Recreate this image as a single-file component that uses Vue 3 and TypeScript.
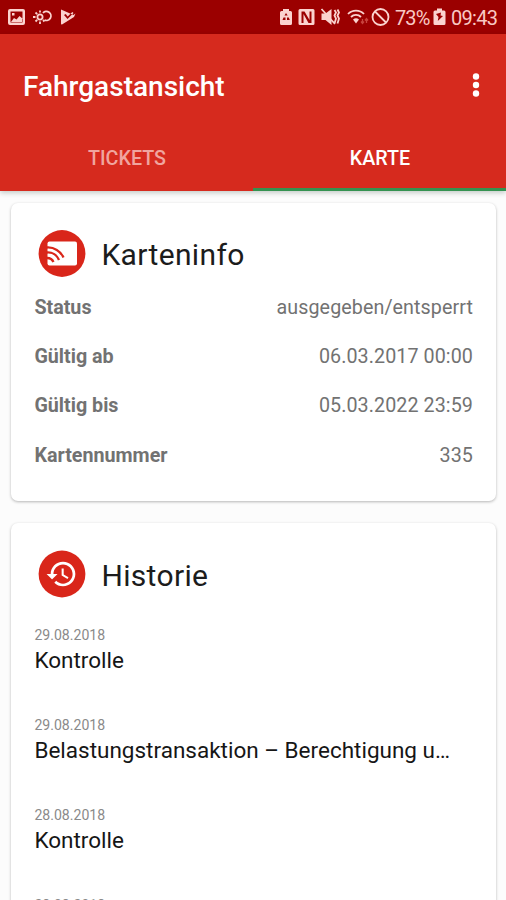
<script setup lang="ts">
interface InfoRow {
  label: string
  value: string
}
interface HistoryEntry {
  date: string
  title: string
}

const infoRows: InfoRow[] = [
  { label: 'Status', value: 'ausgegeben/entsperrt' },
  { label: 'Gültig ab', value: '06.03.2017 00:00' },
  { label: 'Gültig bis', value: '05.03.2022 23:59' },
  { label: 'Kartennummer', value: '335' },
]

const history: HistoryEntry[] = [
  { date: '29.08.2018', title: 'Kontrolle' },
  { date: '29.08.2018', title: 'Belastungstransaktion – Berechtigung u…' },
  { date: '28.08.2018', title: 'Kontrolle' },
  { date: '28.08.2018', title: 'Kontrolle' },
]
</script>

<template>
  <div class="screen">
    <div class="statusbar">
      <svg class="notifications" width="80" height="34" viewBox="0 0 80 34">
        <path class="fill" fill-rule="evenodd" d="M10 9h13a2 2 0 0 1 2 2v12a2 2 0 0 1-2 2H10a2 2 0 0 1-2-2V11a2 2 0 0 1 2-2zM10.500 11.500v11h12v-11zM11 22l3-4 2.500 1.500 3-3.500 3.500 3v3zM12 13h2.500v2.500H12z" />
        <g class="line">
          <path d="M43 13a4.500 4.500 0 1 1 1.500 7" />
          <circle cx="40" cy="17" r="2.600" />
          <path d="M40 10.500v2M40 21.500v2.500M33 17h2.500M35.500 12.500l1.700 1.700M35.500 21.500l1.700-1.700M44.500 21.500l-1.500-1.500" />
        </g>
        <path class="fill" fill-rule="evenodd" d="M61 9.500L73.500 15l2-1.500L74 17 62 24.500q-1 .3-1-1zM64 15l3.500 4 6-6-1.200-1-4.600 4.600-2-2.500z" />
      </svg>
      <div class="system">
        <svg width="120" height="34" viewBox="0 0 120 34">
          <path class="fill" fill-rule="evenodd" d="M12 9h6v2h1.500a1.500 1.500 0 0 1 1.500 1.500v11A1.500 1.500 0 0 1 19.500 25h-9A1.500 1.500 0 0 1 9 23.500v-11A1.500 1.500 0 0 1 10.500 11H12zM13.500 15.500L15 13l1.700 2.500zM11.500 20h3v-2.500h-2zM16 20h2.800l-1-2.500H16z" />
          <path class="fill" fill-rule="evenodd" d="M29 9h13a1.500 1.500 0 0 1 1.500 1.500v13A1.500 1.500 0 0 1 42 25H29a1.500 1.500 0 0 1-1.500-1.500v-13A1.500 1.500 0 0 1 29 9zM30.500 11.500v11.500h2v-9l5 9h3V11.500h-2v8.500l-5-8.500z" />
          <path class="fill" d="M50.500 13.500h4l6-4.500v16l-6-5h-4z" />
          <path class="line" d="M50.500 9l13.500 15M63.500 10l1.500 2.500-1.500 3 1.500 3-1.500 5M66.500 9.500l1.500 3-1.500 3 1.500 3-1.500 5" />
          <path class="line" d="M77 14a11 11 0 0 1 16 0M80 17a7 7 0 0 1 10 0" />
          <path class="fill" d="M82 19.500a4.500 4.500 0 0 1 6 0l-3 4z" />
          <path class="faint" d="M91.500 19v4M90 21.500l1.500 2 1.500-2M95.500 23v-4M94 20.500l1.500-2 1.500 2" />
          <g class="line"><circle cx="109.500" cy="17" r="8" /><path d="M104 11.500l11 11" /></g>
        </svg>
        <span class="percent">73%</span>
        <svg width="16" height="34" viewBox="0 0 16 34">
          <path class="fill" fill-rule="evenodd" d="M5 8.500h5v2h2a1.500 1.500 0 0 1 1.500 1.500v11.500A1.500 1.500 0 0 1 12 25H3a1.500 1.500 0 0 1-1.500-1.500V12A1.500 1.500 0 0 1 3 10.500h2zM9 12.500l-5 1.500 2.500 3-.7 4 5.200-5-2.500-.5z" />
        </svg>
        <span class="clock">09:43</span>
      </div>
    </div>

    <header class="appbar">
      <div class="toolbar">
        <h1>Fahrgastansicht</h1>
        <svg width="12" height="28" viewBox="0 0 12 28">
          <circle cx="6" cy="5.500" r="3.200" /><circle cx="6" cy="14" r="3.200" /><circle cx="6" cy="22.500" r="3.200" />
        </svg>
      </div>
      <nav class="tabs">
        <span class="tab">TICKETS</span>
        <span class="tab active">KARTE</span>
      </nav>
    </header>

    <main class="content">
      <section class="card info">
        <div class="heading">
          <svg width="48" height="48" viewBox="0 0 48 48">
            <circle class="disc" cx="24" cy="23.500" r="23.400" />
            <rect x="9.500" y="11.500" width="29.500" height="24" rx="2" fill="#fff" />
            <path class="waves" d="M9 17.500A17 17 0 0 1 25.500 27.500M9 22.500A12 12 0 0 1 21 30M9 28A7 7 0 0 1 15.500 32" />
          </svg>
          <h2>Karteninfo</h2>
        </div>
        <dl>
          <div v-for="row in infoRows" :key="row.label" class="row">
            <dt>{{ row.label }}</dt>
            <dd>{{ row.value }}</dd>
          </div>
        </dl>
      </section>

      <section class="card history">
        <div class="heading">
          <svg width="48" height="48" viewBox="0 0 48 48">
            <circle class="disc" cx="24" cy="24" r="23.400" />
            <path fill="#fff" transform="translate(7.200 7.600) scale(1.370)" d="M13 3c-4.970 0-9 4.030-9 9H1l3.890 3.890.07.14L9 12H6c0-3.870 3.130-7 7-7s7 3.130 7 7-3.130 7-7 7c-1.930 0-3.680-.79-4.940-2.060l-1.420 1.420C8.270 19.990 10.510 21 13 21c4.970 0 9-4.030 9-9s-4.030-9-9-9zm-1 5v5l4.280 2.540.72-1.210-3.500-2.080V8H12z" />
          </svg>
          <h2>Historie</h2>
        </div>
        <ul>
          <li v-for="(entry, i) in history" :key="i">
            <time>{{ entry.date }}</time>
            <p>{{ entry.title }}</p>
          </li>
        </ul>
      </section>
    </main>
  </div>
</template>

<style>
body {
  margin: 0;
  overflow: hidden;
}
</style>

<style scoped>
.screen {
  width: 506px;
  height: 900px;
  overflow: hidden;
  display: flex;
  flex-direction: column;
  background: #fcfcfc;
  font-family: Roboto, 'Liberation Sans', sans-serif;
  white-space: nowrap;
}
h1, h2, p, dl, dt, dd, ul {
  margin: 0;
  padding: 0;
}
svg {
  display: block;
  flex: none;
}
.statusbar {
  height: 34px;
  flex: none;
  display: flex;
  justify-content: space-between;
  background: #9b0000;
  color: #f9c9c4;
}
.system {
  display: flex;
  align-items: center;
  width: 235px;
  font-size: 20px;
  line-height: 34px;
}
.percent {
  width: 37px;
  padding-top: 1px;
  margin-left: 4px;
  letter-spacing: -0.9px;
}
.clock {
  padding-top: 1px;
  margin-left: 3px;
  letter-spacing: -0.7px;
}
.fill {
  fill: #fbd3cf;
}
.line {
  fill: none;
  stroke: #fbd3cf;
  stroke-width: 1.8;
}
.faint {
  fill: none;
  stroke: #c8443e;
  stroke-width: 1.3;
}
.appbar {
  height: 157px;
  flex: none;
  display: flex;
  flex-direction: column;
  background: #d62a1e;
  color: #fff;
  box-shadow: 0 2px 5px rgba(0, 30, 20, 0.22);
  z-index: 1;
}
.toolbar {
  height: 102px;
  display: flex;
  align-items: center;
  justify-content: space-between;
  padding: 0 24.400px 0 23px;
}
.toolbar svg {
  fill: #fff;
}
h1 {
  padding-top: 2px;
  font-size: 28px;
  font-weight: 500;
}
.tabs {
  flex: 1;
  display: flex;
}
.tab {
  flex: 1;
  box-sizing: border-box;
  height: 55px;
  padding: 11px 0 0 1px;
  text-align: center;
  font-size: 19.700px;
  font-weight: 500;
  line-height: 24px;
  color: #f0a59f;
}
.tab.active {
  color: #fff;
  border-bottom: 3px solid #349250;
}
.content {
  padding: 12px 10px 0 11px;
  display: flex;
  flex-direction: column;
  gap: 22px;
}
.card {
  flex: none;
  box-sizing: border-box;
  background: #fff;
  border-radius: 7px;
  padding: 27px 23px 0 23.400px;
  box-shadow: 0 1px 3px rgba(0, 0, 0, 0.28);
}
.info {
  height: 298px;
}
.history {
  height: 420px;
}
.heading {
  display: flex;
  align-items: center;
  gap: 15px;
  height: 48px;
  padding-left: 4px;
}
.disc {
  fill: #d9261a;
}
.waves {
  fill: none;
  stroke: #d9261a;
  stroke-width: 2.3;
}
h2 {
  padding-top: 4px;
  font-size: 30px;
  font-weight: 400;
  letter-spacing: 0.35px;
  line-height: 40px;
  color: #1c1c1c;
}
.info h2 {
  padding-top: 2px;
}
dl {
  padding-top: 5px;
}
.row {
  height: 49.200px;
  display: flex;
  align-items: center;
  justify-content: space-between;
  font-size: 19.700px;
  line-height: 49px;
  color: #727272;
}
dt {
  font-weight: 700;
}
dd {
  letter-spacing: 0.08px;
}
ul {
  list-style: none;
  padding-top: 29px;
}
li {
  height: 90px;
}
time {
  display: block;
  font-size: 14.100px;
  line-height: 16px;
  color: #8a8a8a;
}
p {
  margin-top: 3px;
  font-size: 22.500px;
  line-height: 28px;
  color: #161616;
}
</style>
